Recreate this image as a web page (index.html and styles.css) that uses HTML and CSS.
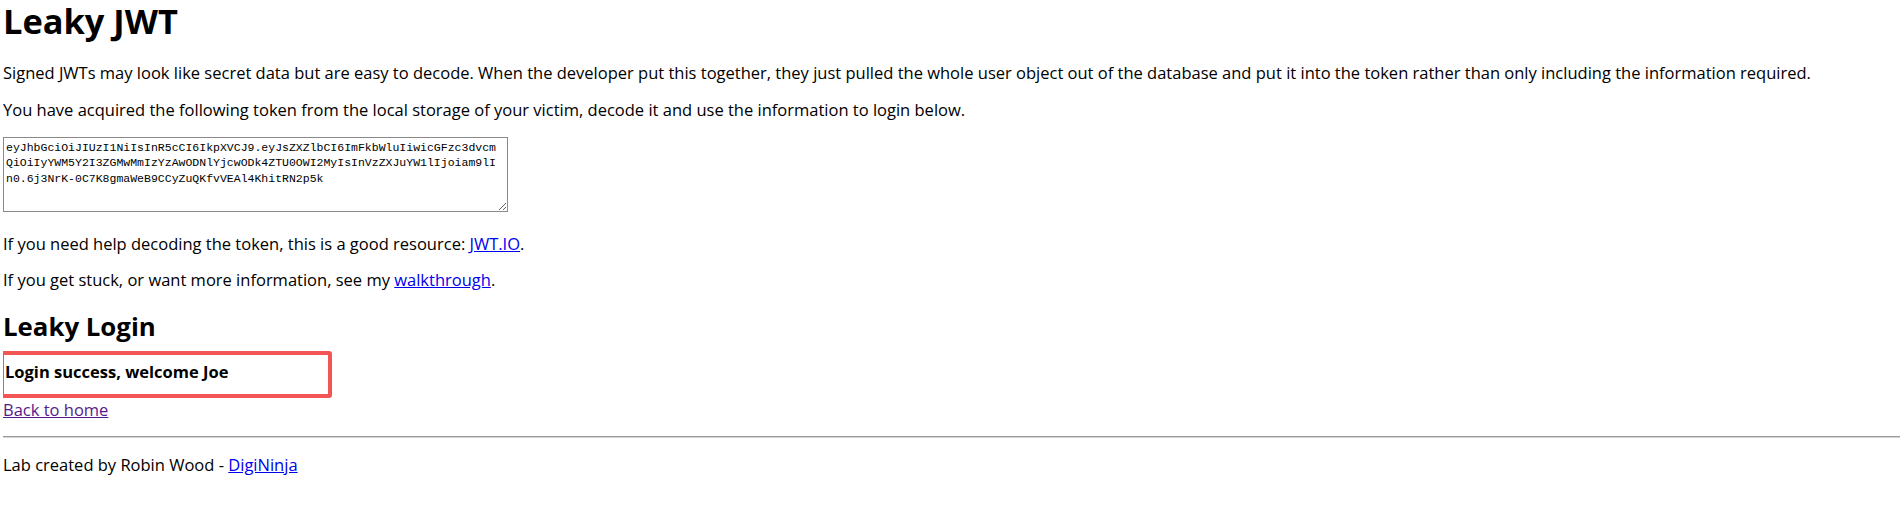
FILE: index.html
```html
<!DOCTYPE html>
<html lang="en">
<head>
<meta charset="utf-8">
<title>Leaky JWT</title>
<link rel="stylesheet" href="styles.css">
</head>
<body>
<h1 class="title">Leaky JWT</h1>
<p class="intro">Signed JWTs may look like secret data but are easy to decode. When the developer put this together, they just pulled the whole user object out of the database and put it into the token rather than only including the information required.</p>
<p class="intro intro-last">You have acquired the following token from the local storage of your victim, decode it and use the information to login below.</p>
<textarea class="token" readonly>eyJhbGciOiJIUzI1NiIsInR5cCI6IkpXVCJ9.eyJsZXZlbCI6ImFkbWluIiwicGFzc3dvcmQiOiIyYWM5Y2I3ZGMwMmIzYzAwODNlYjcwODk4ZTU0OWI2MyIsInVzZXJuYW1lIjoiam9lIn0.6j3NrK-0C7K8gmaWeB9CCyZuQKfvVEAl4KhitRN2p5k</textarea>
<p class="help">If you need help decoding the token, this is a good resource: <a class="link" href="#">JWT.IO</a>.</p>
<p class="help help-second">If you get stuck, or want more information, see my <a class="link" href="#">walkthrough</a>.</p>
<h2 class="subtitle">Leaky Login</h2>
<div class="result">Login success, welcome Joe</div>
<p class="back"><a class="link visited" href="#">Back to home</a></p>
<hr class="rule">
<p class="footer">Lab created by Robin Wood - <a class="link" href="#">DigiNinja</a></p>
</body>
</html>
```
FILE: styles.css
```css
html, body {
  background: #ffffff;
}
body {
  margin: 0 0 0 3px;
  font-family: "Open Sans", "Noto Sans", sans-serif;
  font-size: 16.5px;
  line-height: 22px;
  color: #000000;
}
.title {
  margin: 0;
  padding-top: 3px;
  font-size: 34.4px;
  line-height: 35px;
  font-weight: 700;
}
p {
  margin: 0;
}
.intro {
  margin-top: 23.6px;
}
.intro + .intro {
  margin-top: 15px;
}
.token {
  display: block;
  box-sizing: border-box;
  margin: 16.4px 0 0 0;
  width: 505px;
  height: 75px;
  padding: 2px 9px 2px 2px;
  border: 1px solid #8a8a8a;
  border-radius: 0;
  font-family: "Liberation Mono", monospace;
  font-size: 11.5px;
  line-height: 15.3px;
  color: #000000;
  background: #ffffff;
  resize: both;
  overflow: hidden;
  word-break: break-all;
}
.help {
  margin-top: 20.6px;
}
.help-second {
  margin-top: 14.5px;
}
.subtitle {
  margin: 20px 0 0 0;
  font-size: 25.8px;
  line-height: 30px;
  font-weight: 700;
}
.result {
  margin: 10px 0 0 -3px;
  width: 332px;
  box-sizing: border-box;
  padding: 6px 0 11px 1px;
  border: 4px solid #f35454;
  border-radius: 3px;
  font-weight: 700;
}
.back {
  margin-top: 1px;
}
.link {
  color: #0000ee;
  text-decoration: underline;
}
.link.visited {
  color: #551a8b;
}
.rule {
  margin: 15.4px 0 0 0;
  height: 0;
  border: 0;
  border-top: 1px solid #9a9a9a;
  border-bottom: 1px solid #d4d4d4;
}
.footer {
  margin-top: 15.6px;
}
```
